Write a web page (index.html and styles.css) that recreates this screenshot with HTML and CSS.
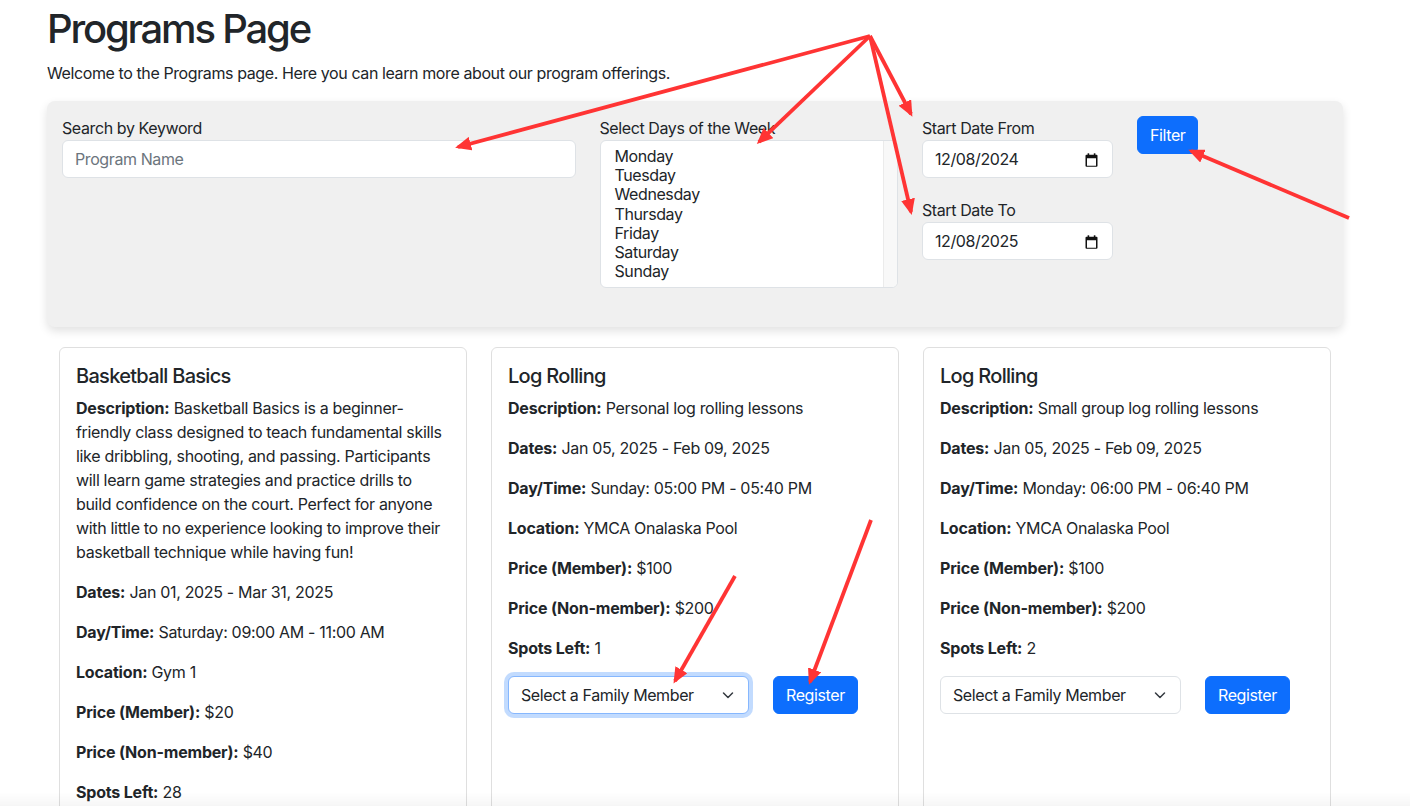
FILE: index.html
```html
<!DOCTYPE html>
<html lang="en">
<head>
<meta charset="utf-8">
<title>Programs Page</title>
<link rel="stylesheet" href="styles.css">
</head>
<body>
<main class="page">
  <h1 class="page-title">Programs Page</h1>
  <p class="intro">Welcome to the Programs page. Here you can learn more about our program offerings.</p>

  <section class="filter-panel">
    <div class="filter-row">
      <div class="col col-5">
        <label class="form-label" for="kw">Search by Keyword</label>
        <input id="kw" class="form-control" type="text" placeholder="Program Name">
      </div>
      <div class="col col-3">
        <div class="form-label">Select Days of the Week</div>
        <div class="day-list" role="listbox">
          <div class="day-options">
            <div class="day-option">Monday</div>
            <div class="day-option">Tuesday</div>
            <div class="day-option">Wednesday</div>
            <div class="day-option">Thursday</div>
            <div class="day-option">Friday</div>
            <div class="day-option">Saturday</div>
            <div class="day-option">Sunday</div>
          </div>
          <div class="day-track"></div>
        </div>
      </div>
      <div class="col col-2">
        <div class="date-group">
          <div class="form-label">Start Date From</div>
          <div class="date-field">
            <span class="date-value">12/08/2024</span>
            <svg class="cal-icon" width="13" height="14" viewBox="0 0 13 14"><rect x="2.6" y="0.3" width="1.6" height="2.6" fill="#111"/><rect x="8.8" y="0.3" width="1.6" height="2.6" fill="#111"/><path fill="#111" fill-rule="evenodd" d="M1.5 1.8h10a1 1 0 0 1 1 1v10a1 1 0 0 1-1 1h-10a1 1 0 0 1-1-1v-10a1 1 0 0 1 1-1zM2 5.2v7.6h9v-7.6z"/></svg>
          </div>
        </div>
        <div class="date-group">
          <div class="form-label">Start Date To</div>
          <div class="date-field">
            <span class="date-value">12/08/2025</span>
            <svg class="cal-icon" width="13" height="14" viewBox="0 0 13 14"><rect x="2.6" y="0.3" width="1.6" height="2.6" fill="#111"/><rect x="8.8" y="0.3" width="1.6" height="2.6" fill="#111"/><path fill="#111" fill-rule="evenodd" d="M1.5 1.8h10a1 1 0 0 1 1 1v10a1 1 0 0 1-1 1h-10a1 1 0 0 1-1-1v-10a1 1 0 0 1 1-1zM2 5.2v7.6h9v-7.6z"/></svg>
          </div>
        </div>
      </div>
      <div class="col col-2">
        <button class="btn btn-primary" type="button">Filter</button>
      </div>
    </div>
  </section>

  <section class="cards">
    <article class="card">
      <h5 class="card-title">Basketball Basics</h5>
      <p><strong>Description:</strong> Basketball Basics is a beginner-friendly class designed to teach fundamental skills like dribbling, shooting, and passing. Participants will learn game strategies and practice drills to build confidence on the court. Perfect for anyone with little to no experience looking to improve their basketball technique while having fun!</p>
      <p><strong>Dates:</strong> Jan 01, 2025 - Mar 31, 2025</p>
      <p><strong>Day/Time:</strong> Saturday: 09:00 AM - 11:00 AM</p>
      <p><strong>Location:</strong> Gym 1</p>
      <p><strong>Price (Member):</strong> $20</p>
      <p><strong>Price (Non-member):</strong> $40</p>
      <p><strong>Spots Left:</strong> 28</p>
      <div class="card-actions">
        <div class="select-wrap">
          <select class="form-select"><option>Select a Family Member</option></select>
          <svg class="chev" width="12" height="12" viewBox="0 0 12 12"><path fill="none" stroke="#343a40" stroke-linecap="round" stroke-linejoin="round" stroke-width="1.5" d="m1.5 4 4.5 4.5 4.5-4.5"/></svg>
        </div>
        <button class="btn btn-primary" type="button">Register</button>
      </div>
    </article>

    <article class="card">
      <h5 class="card-title">Log Rolling</h5>
      <p><strong>Description:</strong> Personal log rolling lessons</p>
      <p><strong>Dates:</strong> Jan 05, 2025 - Feb 09, 2025</p>
      <p><strong>Day/Time:</strong> Sunday: 05:00 PM - 05:40 PM</p>
      <p><strong>Location:</strong> YMCA Onalaska Pool</p>
      <p><strong>Price (Member):</strong> $100</p>
      <p><strong>Price (Non-member):</strong> $200</p>
      <p><strong>Spots Left:</strong> 1</p>
      <div class="card-actions">
        <div class="select-wrap">
          <select class="form-select is-focused"><option>Select a Family Member</option></select>
          <svg class="chev" width="12" height="12" viewBox="0 0 12 12"><path fill="none" stroke="#343a40" stroke-linecap="round" stroke-linejoin="round" stroke-width="1.5" d="m1.5 4 4.5 4.5 4.5-4.5"/></svg>
        </div>
        <button class="btn btn-primary" type="button">Register</button>
      </div>
    </article>

    <article class="card">
      <h5 class="card-title">Log Rolling</h5>
      <p><strong>Description:</strong> Small group log rolling lessons</p>
      <p><strong>Dates:</strong> Jan 05, 2025 - Feb 09, 2025</p>
      <p><strong>Day/Time:</strong> Monday: 06:00 PM - 06:40 PM</p>
      <p><strong>Location:</strong> YMCA Onalaska Pool</p>
      <p><strong>Price (Member):</strong> $100</p>
      <p><strong>Price (Non-member):</strong> $200</p>
      <p><strong>Spots Left:</strong> 2</p>
      <div class="card-actions">
        <div class="select-wrap">
          <select class="form-select"><option>Select a Family Member</option></select>
          <svg class="chev" width="12" height="12" viewBox="0 0 12 12"><path fill="none" stroke="#343a40" stroke-linecap="round" stroke-linejoin="round" stroke-width="1.5" d="m1.5 4 4.5 4.5 4.5-4.5"/></svg>
        </div>
        <button class="btn btn-primary" type="button">Register</button>
      </div>
    </article>
  </section>
</main>

<svg class="annotations" width="1410" height="806" viewBox="0 0 1410 806">
  <defs>
    <marker id="ah" viewBox="0 0 16 14" refX="13" refY="7" markerWidth="16" markerHeight="14" markerUnits="userSpaceOnUse" orient="auto">
      <path d="M0 0 L16 7 L0 14 z" fill="#ff3434"/>
    </marker>
  </defs>
  <g stroke="#ff3434" stroke-width="3.8" fill="none" marker-end="url(#ah)">
    <line x1="870" y1="36" x2="458" y2="147"/>
    <line x1="870" y1="36" x2="759" y2="142"/>
    <line x1="870" y1="36" x2="911" y2="114"/>
    <line x1="870" y1="36" x2="911" y2="212"/>
    <line x1="1349" y1="218" x2="1191" y2="151"/>
    <line x1="735" y1="576" x2="675" y2="681"/>
    <line x1="871" y1="520" x2="810" y2="682"/>
  </g>
</svg>
<div class="bottom-fade"></div>
</body>
</html>
```

FILE: styles.css
```css
* { box-sizing: border-box; }

html, body {
  margin: 0;
  padding: 0;
  background: #fff;
}

body {
  font-family: Inter, "Noto Sans", "Liberation Sans", sans-serif;
  font-size: 16px;
  line-height: 1.5;
  letter-spacing: -0.025em;
  color: #212529;
  position: relative;
}

.page {
  width: 1343px;
  padding: 5px 0 0 47px;
}

.page-title {
  margin: 0 0 8px;
  font-size: 40px;
  font-weight: 500;
  line-height: 1.2;
  letter-spacing: -0.055em;
}

.intro {
  margin: 0 0 16px;
}

.filter-panel {
  width: 1296px;
  padding: 15px;
  background: #f0f0f0;
  border-radius: 8px;
  box-shadow: 0 4px 10px rgba(0, 0, 0, 0.12);
}

.filter-row {
  display: flex;
  margin: 0 -12px;
}

.col {
  padding: 0 12px;
}
.col-5 { flex: 0 0 41.6667%; }
.col-3 { flex: 0 0 25%; }
.col-2 { flex: 0 0 16.6667%; }

.form-label {
  display: block;
  font-size: 16px;
  line-height: 24px;
}

.form-control {
  display: block;
  width: 100%;
  height: 38px;
  padding: 6px 12px;
  font: inherit;
  letter-spacing: inherit;
  color: #212529;
  background: #fff;
  border: 1px solid #dee2e6;
  border-radius: 6px;
  outline: none;
}
.form-control::placeholder {
  color: #6c757d;
}

.day-list {
  display: flex;
  height: 148px;
  margin-bottom: 24px;
  background: #fff;
  border: 1px solid #dee2e6;
  border-radius: 6px;
  overflow: hidden;
}
.day-options {
  flex: 1;
  padding: 6px 12px;
}
.day-option {
  padding: 0 2px;
  line-height: 19.2px;
}
.day-track {
  flex: 0 0 14px;
  background: #f8f8f8;
  border-left: 1px solid #ebebeb;
}

.date-group + .date-group {
  margin-top: 20px;
}
.date-field {
  display: flex;
  align-items: center;
  justify-content: space-between;
  height: 38px;
  padding: 6px 14px 6px 12px;
  background: #fff;
  border: 1px solid #dee2e6;
  border-radius: 6px;
}
.cal-icon {
  display: block;
  margin-top: 1px;
}

.btn {
  display: inline-block;
  height: 38px;
  padding: 6px 12px;
  font: inherit;
  letter-spacing: inherit;
  line-height: 24px;
  border: 1px solid transparent;
  border-radius: 6px;
  cursor: pointer;
}
.btn-primary {
  color: #fff;
  background: #0d6efd;
  border-color: #0d6efd;
}

.cards {
  display: grid;
  grid-template-columns: repeat(3, 408px);
  gap: 24px;
  padding: 0 12px;
  margin-top: 20px;
}

.card {
  padding: 16px;
  background: #fff;
  border: 1px solid #dfdfdf;
  border-radius: 6px;
}

.card-title {
  margin: 0 0 8px;
  font-size: 20px;
  font-weight: 500;
  line-height: 1.2;
  letter-spacing: -0.035em;
}

.card p {
  margin: 0 0 16px;
  letter-spacing: -0.02em;
}
.card strong {
  font-weight: 700;
  letter-spacing: -0.012em;
}

.card-actions {
  display: flex;
  align-items: center;
  gap: 24px;
}

.select-wrap {
  position: relative;
  width: 241px;
}
.form-select {
  display: block;
  width: 100%;
  height: 38px;
  padding: 6px 36px 6px 12px;
  font: inherit;
  letter-spacing: inherit;
  color: #212529;
  background: #fff;
  border: 1px solid #dee2e6;
  border-radius: 6px;
  -webkit-appearance: none;
  appearance: none;
  outline: none;
}
.form-select.is-focused {
  border-color: #86b7fe;
  box-shadow: 0 0 0 4px rgba(13, 110, 253, 0.25);
}
.chev {
  position: absolute;
  right: 15px;
  top: 13px;
  pointer-events: none;
}

.annotations {
  position: absolute;
  top: 0;
  left: 0;
  pointer-events: none;
}

.bottom-fade {
  position: fixed;
  left: 0;
  right: 0;
  bottom: 0;
  height: 14px;
  background: linear-gradient(rgba(0, 0, 0, 0), rgba(0, 0, 0, 0.035));
  pointer-events: none;
}
```
